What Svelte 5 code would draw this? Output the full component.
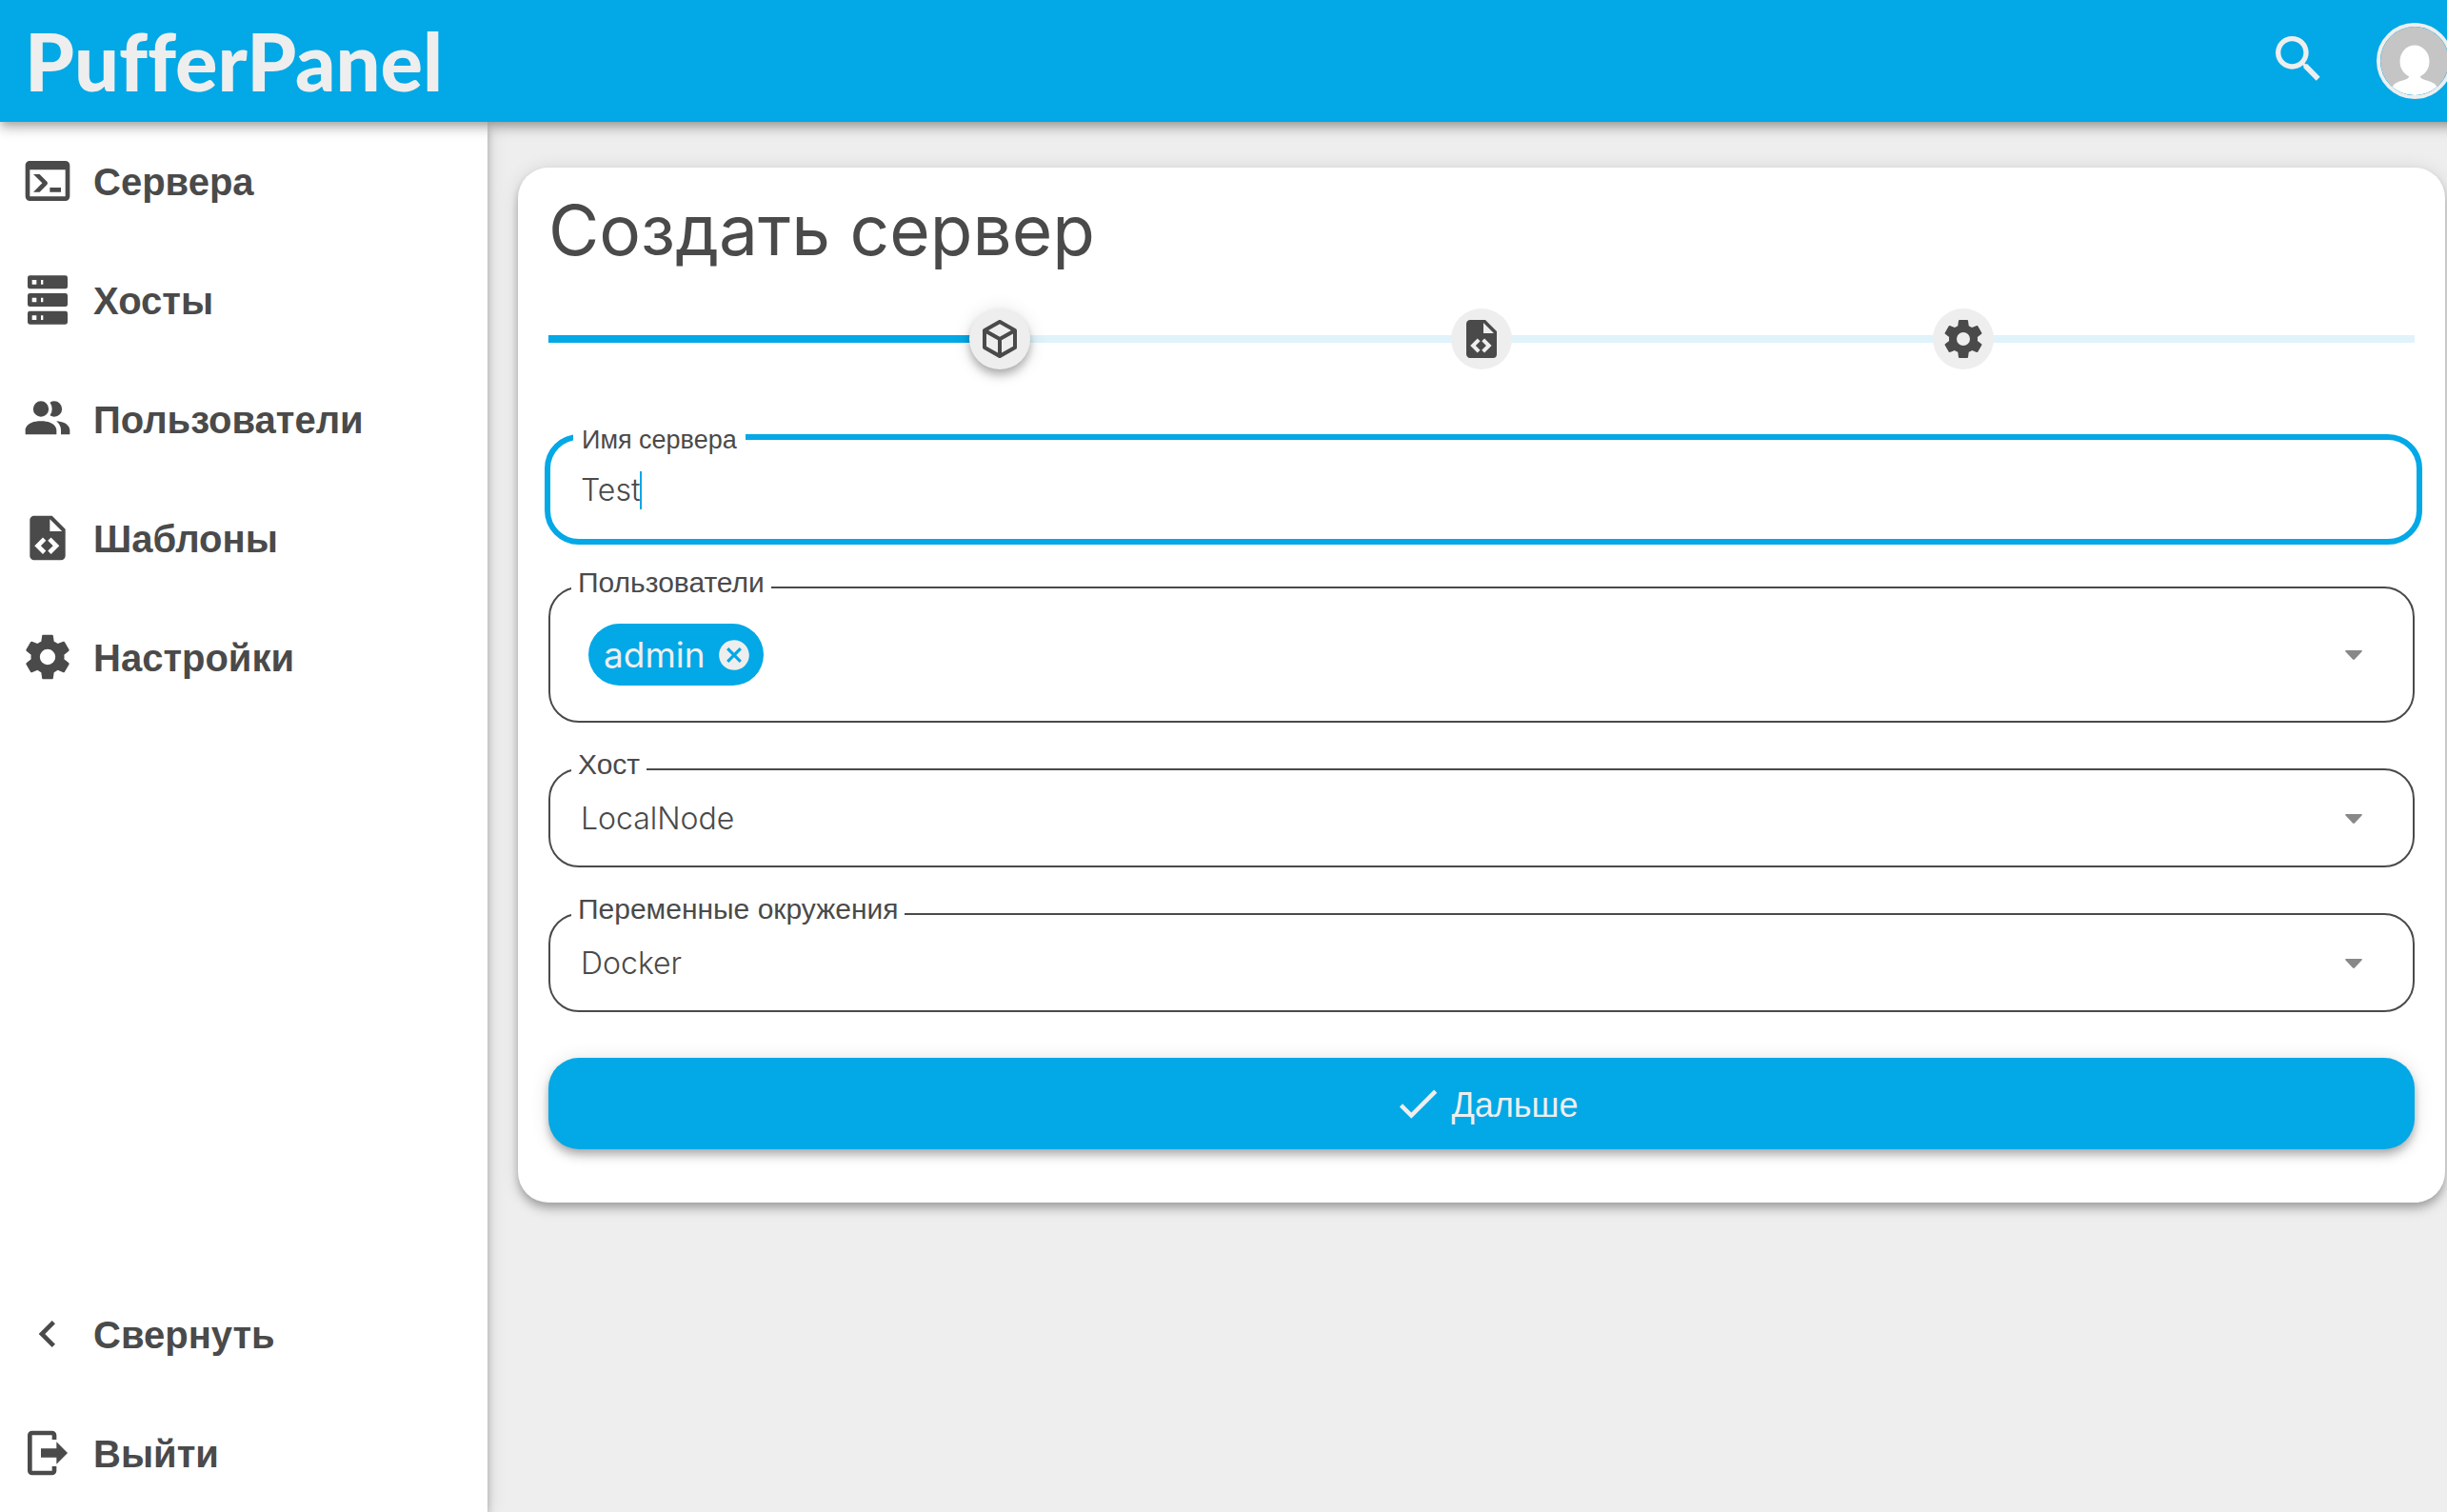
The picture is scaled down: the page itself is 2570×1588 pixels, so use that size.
<script lang="ts">
  const icons = {
    console:
      "M20,19V7H4V19H20M20,3A2,2 0 0,1 22,5V19A2,2 0 0,1 20,21H4A2,2 0 0,1 2,19V5C2,3.89 2.9,3 4,3H20M13,17V15H18V17H13M9.58,13L5.57,9H8.4L11.7,12.3C12.09,12.69 12.09,13.33 11.7,13.72L8.42,17H5.59L9.58,13Z",
    server:
      "M4,1H20A1,1 0 0,1 21,2V6A1,1 0 0,1 20,7H4A1,1 0 0,1 3,6V2A1,1 0 0,1 4,1M4,9H20A1,1 0 0,1 21,10V14A1,1 0 0,1 20,15H4A1,1 0 0,1 3,14V10A1,1 0 0,1 4,9M4,17H20A1,1 0 0,1 21,18V22A1,1 0 0,1 20,23H4A1,1 0 0,1 3,22V18A1,1 0 0,1 4,17M9,5H10V3H9V5M9,13H10V11H9V13M9,21H10V19H9V21M5,3V5H7V3H5M5,11V13H7V11H5M5,19V21H7V19H5Z",
    users:
      "M16 17V19H2V17S2 13 9 13 16 17 16 17M12.5 7.5A3.5 3.5 0 1 0 9 11A3.5 3.5 0 0 0 12.5 7.5M15.94 13A5.32 5.32 0 0 1 18 17V19H22V17S22 13.37 15.94 13M15 4A3.39 3.39 0 0 0 13.07 4.59A5 5 0 0 1 13.07 10.41A3.39 3.39 0 0 0 15 11A3.5 3.5 0 0 0 15 4Z",
    template:
      "M13,9H18.5L13,3.5V9M6,2H14L20,8V20A2,2 0 0,1 18,22H6C4.89,22 4,21.1 4,20V4C4,2.89 4.89,2 6,2M6.12,15.5L9.86,19.24L11.28,17.83L8.95,15.5L11.28,13.17L9.86,11.76L6.12,15.5M17.28,15.5L13.54,11.76L12.12,13.17L14.45,15.5L12.12,17.83L13.54,19.24L17.28,15.5Z",
    settings:
      "M12,15.5A3.5,3.5 0 0,1 8.5,12A3.5,3.5 0 0,1 12,8.5A3.5,3.5 0 0,1 15.5,12A3.5,3.5 0 0,1 12,15.5M19.43,12.97C19.47,12.65 19.5,12.33 19.5,12C19.5,11.67 19.47,11.34 19.43,11L21.54,9.37C21.73,9.22 21.78,8.95 21.66,8.73L19.66,5.27C19.54,5.05 19.27,4.96 19.05,5.05L16.56,6.05C16.04,5.66 15.5,5.32 14.87,5.07L14.5,2.42C14.46,2.18 14.25,2 14,2H10C9.75,2 9.54,2.18 9.5,2.42L9.13,5.07C8.5,5.32 7.96,5.66 7.44,6.05L4.95,5.05C4.73,4.96 4.46,5.05 4.34,5.27L2.34,8.73C2.21,8.95 2.27,9.22 2.46,9.37L4.57,11C4.53,11.34 4.5,11.67 4.5,12C4.5,12.33 4.53,12.65 4.57,12.97L2.46,14.63C2.27,14.78 2.21,15.05 2.34,15.27L4.34,18.73C4.46,18.95 4.73,19.03 4.95,18.95L7.44,17.94C7.96,18.34 8.5,18.68 9.13,18.93L9.5,21.58C9.54,21.82 9.75,22 10,22H14C14.25,22 14.46,21.82 14.5,21.58L14.87,18.93C15.5,18.67 16.04,18.34 16.56,17.94L19.05,18.95C19.27,19.03 19.54,18.95 19.66,18.73L21.66,15.27C21.78,15.05 21.73,14.78 21.54,14.63L19.43,12.97Z",
    collapse: "M15.41,16.58L10.83,12L15.41,7.41L14,6L8,12L14,18L15.41,16.58Z",
    logout:
      "M16,17V14H9V10H16V7L21,12L16,17M14,2A2,2 0 0,1 16,4V6H14V4H5V20H14V18H16V20A2,2 0 0,1 14,22H5A2,2 0 0,1 3,20V4A2,2 0 0,1 5,2H14Z",
    cube: "M21,16.5C21,16.88 20.79,17.21 20.47,17.38L12.57,21.82C12.41,21.94 12.21,22 12,22C11.79,22 11.59,21.94 11.43,21.82L3.53,17.38C3.21,17.21 3,16.88 3,16.5V7.5C3,7.12 3.21,6.79 3.53,6.62L11.43,2.18C11.59,2.06 11.79,2 12,2C12.21,2 12.41,2.06 12.57,2.18L20.47,6.62C20.79,6.79 21,7.12 21,7.5V16.5M12,4.15L6.04,7.5L12,10.85L17.96,7.5L12,4.15M5,15.91L11,19.29V12.58L5,9.21V15.91M19,15.91V9.21L13,12.58V19.29L19,15.91Z",
    search:
      "M9.5,3A6.5,6.5 0 0,1 16,9.5C16,11.11 15.41,12.59 14.44,13.73L14.71,14H15.5L20.5,19L19,20.5L14,15.5V14.71L13.73,14.44C12.59,15.41 11.11,16 9.5,16A6.5,6.5 0 0,1 3,9.5A6.5,6.5 0 0,1 9.5,3M9.5,5C7,5 5,7 5,9.5C5,12 7,14 9.5,14C12,14 14,12 14,9.5C14,7 12,5 9.5,5Z",
    remove:
      "M12,2C17.53,2 22,6.47 22,12C22,17.53 17.53,22 12,22C6.47,22 2,17.53 2,12C2,6.47 6.47,2 12,2M15.59,7L12,10.59L8.41,7L7,8.41L10.59,12L7,15.59L8.41,17L12,13.41L15.59,17L17,15.59L13.41,12L17,8.41L15.59,7Z",
    check: "M21,7L9,19L3.5,13.5L4.91,12.09L9,16.17L19.59,5.59L21,7Z",
  };

  const nav = [
    { icon: icons.console, label: "Сервера", href: "#servers" },
    { icon: icons.server, label: "Хосты", href: "#nodes" },
    { icon: icons.users, label: "Пользователи", href: "#users" },
    { icon: icons.template, label: "Шаблоны", href: "#templates" },
    { icon: icons.settings, label: "Настройки", href: "#settings" },
  ];

  const steps = [icons.cube, icons.template, icons.settings];

  let step = $state(0);
  let name = $state("Test");
  let users = $state(["admin"]);
  let node = $state("LocalNode");
  let environment = $state("Docker");

  let progress = $derived(((step + 1) / (steps.length + 1)) * 100);

  function removeUser(user: string) {
    users = users.filter((u) => u !== user);
  }

  function next() {
    if (step < steps.length - 1) step++;
  }
</script>

{#snippet icon(path: string)}
  <svg class="icon" viewBox="0 0 24 24" aria-hidden="true"><path d={path} /></svg>
{/snippet}

{#snippet arrow()}
  <svg class="arrow" viewBox="0 0 18 10" aria-hidden="true"><path d="M1 0H17Q18.500 .5 17.500 1.500L10 9.500Q9 10.300 8 9.500L.5 1.500Q-.5 .5 1 0Z" /></svg>
{/snippet}

<div class="app">
  <header class="topbar">
    <a class="logo" href="#home">PufferPanel</a>
    <button class="search" aria-label="Поиск">{@render icon(icons.search)}</button>
    <button class="avatar" aria-label="Профиль">
      <svg viewBox="0 0 72 72" aria-hidden="true">
        <rect width="72" height="72" fill="#c5c5c5" />
        <ellipse cx="36" cy="36.500" rx="15.500" ry="17" fill="#fff" />
        <path d="M30 48V53Q29 55 25 56Q14 58 11 66V72H61V66Q58 58 47 56Q43 55 42 53V48Z" fill="#fff" />
      </svg>
    </button>
  </header>

  <div class="body">
    <nav class="sidebar">
      {#each nav as item}
        <a class="nav-item" href={item.href}>{@render icon(item.icon)}<span>{item.label}</span></a>
      {/each}
      <button class="nav-item bottom">{@render icon(icons.collapse)}<span>Свернуть</span></button>
      <a class="nav-item" href="#logout">{@render icon(icons.logout)}<span>Выйти</span></a>
    </nav>

    <main>
      <section class="card">
        <h1>Создать сервер</h1>

        <div class="stepper">
          <div class="track"><div class="fill" style="width: {progress}%"></div></div>
          {#each steps as path, i}
            <button class="step" class:active={i === step} aria-label="Шаг {i + 1}" onclick={() => (step = i)}>
              {@render icon(path)}
            </button>
          {/each}
        </div>

        <div class="fields">
          <div class="field focused">
            <label for="name">Имя сервера</label>
            <input id="name" class="name" type="text" bind:value={name} />
            <span class="caret"></span>
          </div>

          <div class="field tags">
            <label for="users">Пользователи</label>
            {#each users as user}
              <span class="chip">
                {user}
                <button aria-label="Удалить" onclick={() => removeUser(user)}>{@render icon(icons.remove)}</button>
              </span>
            {/each}
            <input id="users" class="grow" type="text" />
            {@render arrow()}
          </div>

          <div class="field">
            <label for="node">Хост</label>
            <select id="node" class="grow" bind:value={node}>
              <option>LocalNode</option>
            </select>
            {@render arrow()}
          </div>

          <div class="field">
            <label for="environment">Переменные окружения</label>
            <select id="environment" class="grow" bind:value={environment}>
              <option>Docker</option>
            </select>
            {@render arrow()}
          </div>

          <button class="next" onclick={next}>{@render icon(icons.check)}<span>Дальше</span></button>
        </div>
      </section>
    </main>
  </div>
</div>

<style>
  :global(body) {
    background: #eeeeee;
    overflow: hidden;
  }

  .app {
    --primary: #03a8e6;
    --text: #4a4a4a;
    --light: #eeeeee;
    --shadow: 0 4px 8px -2px rgba(0, 0, 0, 0.2), 0 8px 10px rgba(0, 0, 0, 0.14),
      0 2px 20px rgba(0, 0, 0, 0.12);
    /* the content runs a little past the right edge of the window */
    width: calc(100% + 30px);
    height: 100vh;
    display: flex;
    flex-direction: column;
    color: var(--text);
    font-family: "Liberation Sans", sans-serif;
  }

  button,
  input,
  select {
    appearance: none;
    margin: 0;
    padding: 0;
    border: none;
    outline: none;
    background: none;
    color: inherit;
    font: inherit;
  }

  button {
    cursor: pointer;
  }

  a {
    color: inherit;
    text-decoration: none;
  }

  .icon {
    display: block;
    width: 48px;
    height: 48px;
    flex: none;
    fill: currentColor;
  }

  .topbar {
    position: relative;
    z-index: 2;
    display: flex;
    align-items: center;
    height: 128px;
    box-sizing: border-box;
    padding: 0 24px 0 26px;
    background: var(--primary);
    color: var(--light);
    box-shadow: var(--shadow);
  }

  .logo {
    flex: 1;
    font-family: Lato, sans-serif;
    font-size: 83px;
    font-weight: 900;
    font-variant-ligatures: none;
    line-height: 128px;
  }

  .search {
    margin-right: 50px;
    padding-bottom: 4px;
  }

  .search .icon {
    width: 64px;
    height: 64px;
  }

  .avatar {
    width: 80px;
    height: 80px;
    box-sizing: border-box;
    border: 4px solid var(--light);
    border-radius: 50%;
    overflow: hidden;
  }

  .avatar svg {
    display: block;
    border-radius: 50%;
  }

  .body {
    flex: 1;
    display: flex;
    min-height: 0;
  }

  .sidebar {
    z-index: 1;
    display: flex;
    flex-direction: column;
    gap: 48px;
    width: 512px;
    box-sizing: border-box;
    padding: 23px 22px 24px;
    background: #fff;
    box-shadow: var(--shadow);
  }

  .nav-item {
    display: flex;
    align-items: center;
    gap: 20px;
    height: 77px;
    font-size: 40px;
    font-weight: 700;
    text-align: left;
  }

  .nav-item span {
    padding-top: 3px;
  }

  .nav-item .icon {
    width: 56px;
    height: 56px;
  }

  .bottom {
    margin-top: auto;
  }

  main {
    flex: 1;
    padding: 48px 32px;
  }

  .card {
    padding: 32px 32px 56px;
    border-radius: 32px;
    background: #fff;
    box-shadow: var(--shadow);
  }

  h1 {
    margin: 0 0 48px;
    font-family: Inter, sans-serif;
    font-size: 73px;
    font-weight: 400;
    line-height: 68px;
  }

  .stepper {
    position: relative;
    display: flex;
    justify-content: space-evenly;
    margin-bottom: 72px;
  }

  .track {
    position: absolute;
    top: 28px;
    left: 0;
    right: 0;
    height: 8px;
    background: #e0f3fb;
  }

  .fill {
    height: 100%;
    background: var(--primary);
  }

  .step {
    position: relative;
    display: flex;
    padding: 8px;
    border-radius: 50%;
    background: var(--light);
  }

  .step.active {
    box-shadow: var(--shadow);
  }

  .fields {
    display: flex;
    flex-direction: column;
    gap: 48px;
  }

  .field {
    position: relative;
    display: flex;
    align-items: center;
    padding: 31px 53px 29px 32px;
    border: 2px solid var(--text);
    border-radius: 32px;
    font-family: Inter, sans-serif;
    font-size: 32px;
    font-weight: 300;
    line-height: 40px;
  }

  .field.focused {
    margin: -4px -8px -4px -4px;
    padding: 33px 32px 31px;
    border: 6px solid var(--primary);
    border-radius: 36px;
  }

  .field.tags {
    padding: 37px 53px 37px 40px;
  }

  .field label {
    position: absolute;
    top: -22px;
    left: 22px;
    padding: 0 7px;
    background: #fff;
    font-family: "Liberation Sans", sans-serif;
    font-size: 30px;
    font-weight: 400;
    line-height: 32px;
  }

  .field.focused label {
    top: -16px;
    left: 24px;
    padding: 0 9px;
    font-size: 27px;
  }

  .name {
    field-sizing: content;
    height: 40px;
  }

  .caret {
    width: 2px;
    height: 40px;
    background: var(--primary);
  }

  .grow {
    flex: 1;
    min-width: 0;
    height: 40px;
  }

  .arrow {
    width: 18px;
    height: 10px;
    fill: #888;
  }

  .chip {
    display: flex;
    align-items: center;
    gap: 11px;
    padding: 10px 12px 10px 16px;
    border-radius: 33px;
    background: var(--primary);
    color: var(--light);
    font-size: 37px;
    font-weight: 400;
    line-height: 45px;
  }

  .chip .icon {
    width: 38px;
    height: 38px;
  }

  .next {
    display: flex;
    align-items: center;
    justify-content: center;
    gap: 8px;
    height: 96px;
    padding-left: 8px;
    border-radius: 32px;
    background: var(--primary);
    color: var(--light);
    font-size: 36px;
    font-weight: 500;
    box-shadow: var(--shadow);
  }

  .next span {
    padding-top: 4px;
  }

  .next .icon {
    width: 54px;
    height: 54px;
  }
</style>
